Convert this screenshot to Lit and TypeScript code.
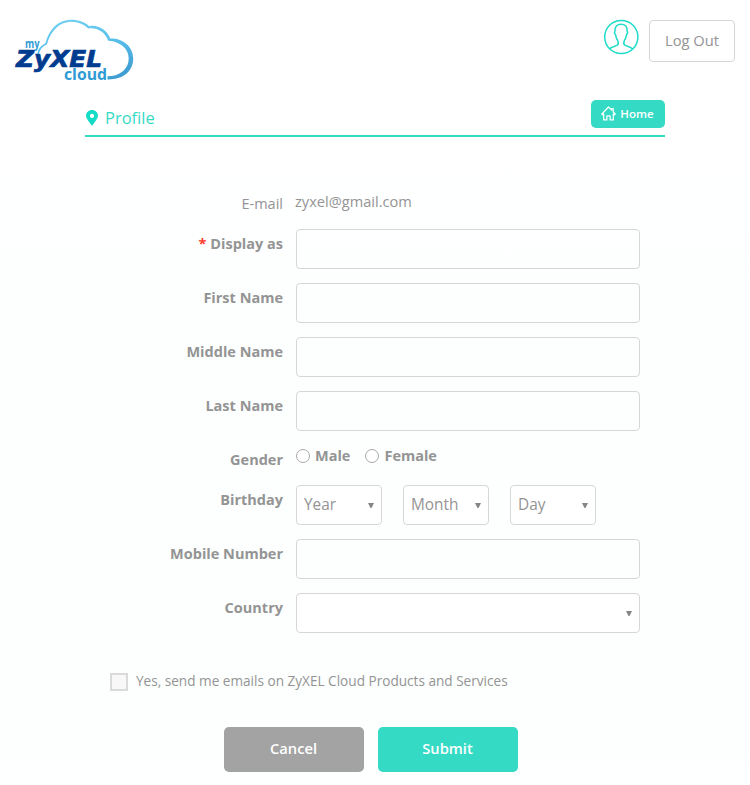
import { LitElement, html, css, svg } from "lit";
import { customElement } from "lit/decorators.js";

const logo = svg`
<svg class="logo" width="122" height="66" viewBox="13 17 122 66">
  <defs>
    <linearGradient id="sky" x1="0" y1="0" x2="0.25" y2="1">
      <stop offset="0" stop-color="#74d0f3" />
      <stop offset="0.45" stop-color="#5cc3ec" />
      <stop offset="1" stop-color="#3f9fd4" />
    </linearGradient>
  </defs>
  <path fill="url(#sky)" d="M37.500 54C38 48.500 41 45.500 45.300 43.500C49 29.500 58 19.800 71 19.800C79 19.800 85 22.300 89.300 26.200C97.500 24.500 107 29.500 110.200 38.600C122 38 133 46 133.200 58.500C133.200 70.500 124 79.700 107.500 79.400L107.500 76.300C120.500 76.300 128.700 68.500 128.700 58.500C128.700 49 120.500 41.500 108.300 40.800C105 32 97.500 27.300 88.300 28.400C83.500 24 78 21.800 71.500 21.800C60 21.800 51 30 46.800 44.700C42.500 46 40.500 49 38.800 54Z" />
  <text class="my" x="25" y="47.500" textLength="14.500" lengthAdjust="spacingAndGlyphs">my</text>
  <text class="brand" x="16" y="66.500" textLength="86" lengthAdjust="spacingAndGlyphs">ZyXEL</text>
  <text class="cloud" x="64" y="79.500" textLength="43" lengthAdjust="spacingAndGlyphs">cloud</text>
</svg>`;

const person = svg`
<svg class="person" width="36" height="36" viewBox="0 0 36 36" fill="none" stroke="#1edcc8" stroke-width="1.500">
  <circle cx="18.300" cy="18" r="16.600" />
  <path d="M6.500 29.800C8.500 27.800 12.500 27.200 14.200 26.200C15.400 25.400 15.500 23.200 14.700 21.500C13.300 19.800 12.900 17.500 12.500 15.500C11 14.500 11.500 13 12 12C11.500 7.500 14.200 5.200 18 5.200C22 5.200 24.700 7.500 24.100 12C24.700 13.200 24.800 14.600 23.600 15.500C23.200 17.500 22.700 19.800 21.400 21.500C20.700 23.200 20.700 25.400 21.900 26.200C23.700 27.200 27.700 27.800 29.600 29.800" />
</svg>`;

const house = svg`
<svg width="15" height="15" viewBox="0 0 15 15" fill="none" stroke="#fff" stroke-width="1.200" stroke-linejoin="round">
  <path d="M7.500 1L0.800 8L1.600 8.800L2.700 8V13.900H5.900V9.900H9.100V13.900H12.300V8L13.400 8.800L14.200 8L12.200 5.800V2.500H10.700V4.200Z" />
</svg>`;

const pin = svg`
<svg width="12" height="16" viewBox="0 0 12 16">
  <path fill="#14dcc6" fill-rule="evenodd" d="M6 0C2.600 0 0 2.500 0 5.800C0 8.500 3.800 13 6 15.800C8.200 13 12 8.500 12 5.800C12 2.500 9.400 0 6 0ZM6 3.800A2.100 2.100 0 1 1 6 8A2.100 2.100 0 0 1 6 3.800Z" />
</svg>`;

const caret = svg`
<svg class="caret" width="6" height="5" viewBox="0 0 6 5"><path fill="#858585" d="M0 0H6L3.500 5H2.500Z" /></svg>`;

@customElement("app-root")
export class AppRoot extends LitElement {
  static styles = css`
    :host {
      display: block;
      box-sizing: border-box;
      height: 785px;
      overflow: hidden;
      background: linear-gradient(#fff 0, #fff 80px, #fdfffe 300px, #fcfffe 690px, #feffff 785px);
      font-family: "Open Sans", "Noto Sans", sans-serif;
      font-size: 14.500px;
      color: #949494;
    }
    * { box-sizing: border-box; }
    svg { display: block; flex: none; }
    button { font: inherit; padding: 0; border: 0; cursor: pointer; }
    header { display: flex; align-items: flex-start; height: 100px; padding: 17px 15px 0 13px; }
    .my, .cloud { font-weight: 700; fill: #2f9bd4; }
    .my { font-size: 12px; }
    .cloud { font-size: 16px; }
    .brand { font-family: "DejaVu Sans", sans-serif; font-size: 23px; font-weight: 700; font-style: italic; fill: #003c8f; stroke: #003c8f; stroke-width: 0.700; }
    .person { margin: 2px 10px 0 auto; }
    .logout {
      width: 86px; height: 42px; margin-top: 3px; padding-bottom: 2px;
      border: 1px solid #d5d7d7; border-radius: 4px; background: #fff;
      color: #949494; font-size: 14.700px;
    }
    .title { display: flex; width: 580px; height: 37px; margin: 0 auto; border-bottom: 2px solid #35dac5; }
    h1 {
      display: flex; align-items: center; gap: 7px; height: 35px; margin: 0 auto 0 1px;
      font-size: 16.500px; font-weight: 400; color: #35dac5;
    }
    .home {
      display: flex; align-items: center; justify-content: center; gap: 4px;
      width: 74px; height: 28px; padding: 0 1px 1px 0; border-radius: 5px;
      background: #35dac5; color: #fff; font-size: 11.500px; font-weight: 600;
    }
    form { width: 580px; margin: 52px auto 0; }
    .row { display: grid; grid-template-columns: 198px 344px; column-gap: 13px; height: 54px; align-items: start; }
    .row.short { height: 40px; }
    .label { line-height: 30px; text-align: right; font-weight: 700; white-space: nowrap; }
    .label.plain { font-weight: 400; }
    .req { color: #ff3b30; }
    .value { line-height: 24px; margin-left: -1px; font-size: 14.600px; }
    .box {
      display: flex; align-items: center; justify-content: space-between;
      width: 100%; height: 40px; padding: 0 7px 0 7px;
      border: 1px solid #d5d8d7; border-radius: 4px; background: transparent;
      font-size: 15.400px;
    }
    .box span { margin-top: -1px; }
    .box.filled { background: #fff; }
    .dates { display: grid; grid-template-columns: repeat(3, 86px); gap: 21px; }
    .radios { display: flex; gap: 15px; height: 22px; font-weight: 700; }
    .radio { display: flex; align-items: center; gap: 5px; }
    .name { margin-top: -2px; }
    .dot { width: 14px; height: 14px; border: 1px solid #a9a9a9; border-radius: 50%; background: #fff; }
    .consent { display: flex; align-items: center; gap: 8px; height: 18px; margin: 26px 0 36px 25px; font-size: 13.600px; }
    .check { width: 18px; height: 18px; border: 2px solid #dadada; background: #f8f8f8; }
    .consent-text { line-height: 18px; margin-top: -2px; white-space: nowrap; }
    .actions { display: flex; gap: 14px; margin-left: 139px; }
    .action { width: 140px; height: 45px; padding: 0 1px 3px 0; border-radius: 5px; background: #35dac5; color: #fff; font-size: 14.700px; font-weight: 600; }
    .cancel { background: #a3a3a3; }
  `;

  private field(label: string, required = false) {
    return html`<div class="row">
      <div class="label">${required ? html`<span class="req">*</span> ` : ""}${label}</div>
      <div class="box"></div>
    </div>`;
  }

  render() {
    return html`
      <header>${logo}${person}<button class="logout">Log Out</button></header>
      <div class="title">
        <h1>${pin}<span>Profile</span></h1>
        <button class="home">${house}<span>Home</span></button>
      </div>
      <form @submit=${(e: Event) => e.preventDefault()}>
        <div class="row short">
          <div class="label plain">E-mail</div>
          <div class="value">zyxel@gmail.com</div>
        </div>
        ${this.field("Display as", true)}
        ${["First Name", "Middle Name", "Last Name"].map((l) => this.field(l))}
        <div class="row short">
          <div class="label">Gender</div>
          <div class="radios">
            ${["Male", "Female"].map((g) => html`<label class="radio"><span class="dot"></span><span class="name">${g}</span></label>`)}
          </div>
        </div>
        <div class="row">
          <div class="label">Birthday</div>
          <div class="dates">
            ${["Year", "Month", "Day"].map((d) => html`<div class="box filled"><span>${d}</span>${caret}</div>`)}
          </div>
        </div>
        ${this.field("Mobile Number")}
        <div class="row">
          <div class="label">Country</div>
          <div class="box filled"><span></span>${caret}</div>
        </div>
        <div class="consent">
          <span class="check"></span>
          <span class="consent-text">Yes, send me emails on ZyXEL Cloud Products and Services</span>
        </div>
        <div class="actions">
          <button class="action cancel">Cancel</button>
          <button class="action">Submit</button>
        </div>
      </form>
    `;
  }
}
